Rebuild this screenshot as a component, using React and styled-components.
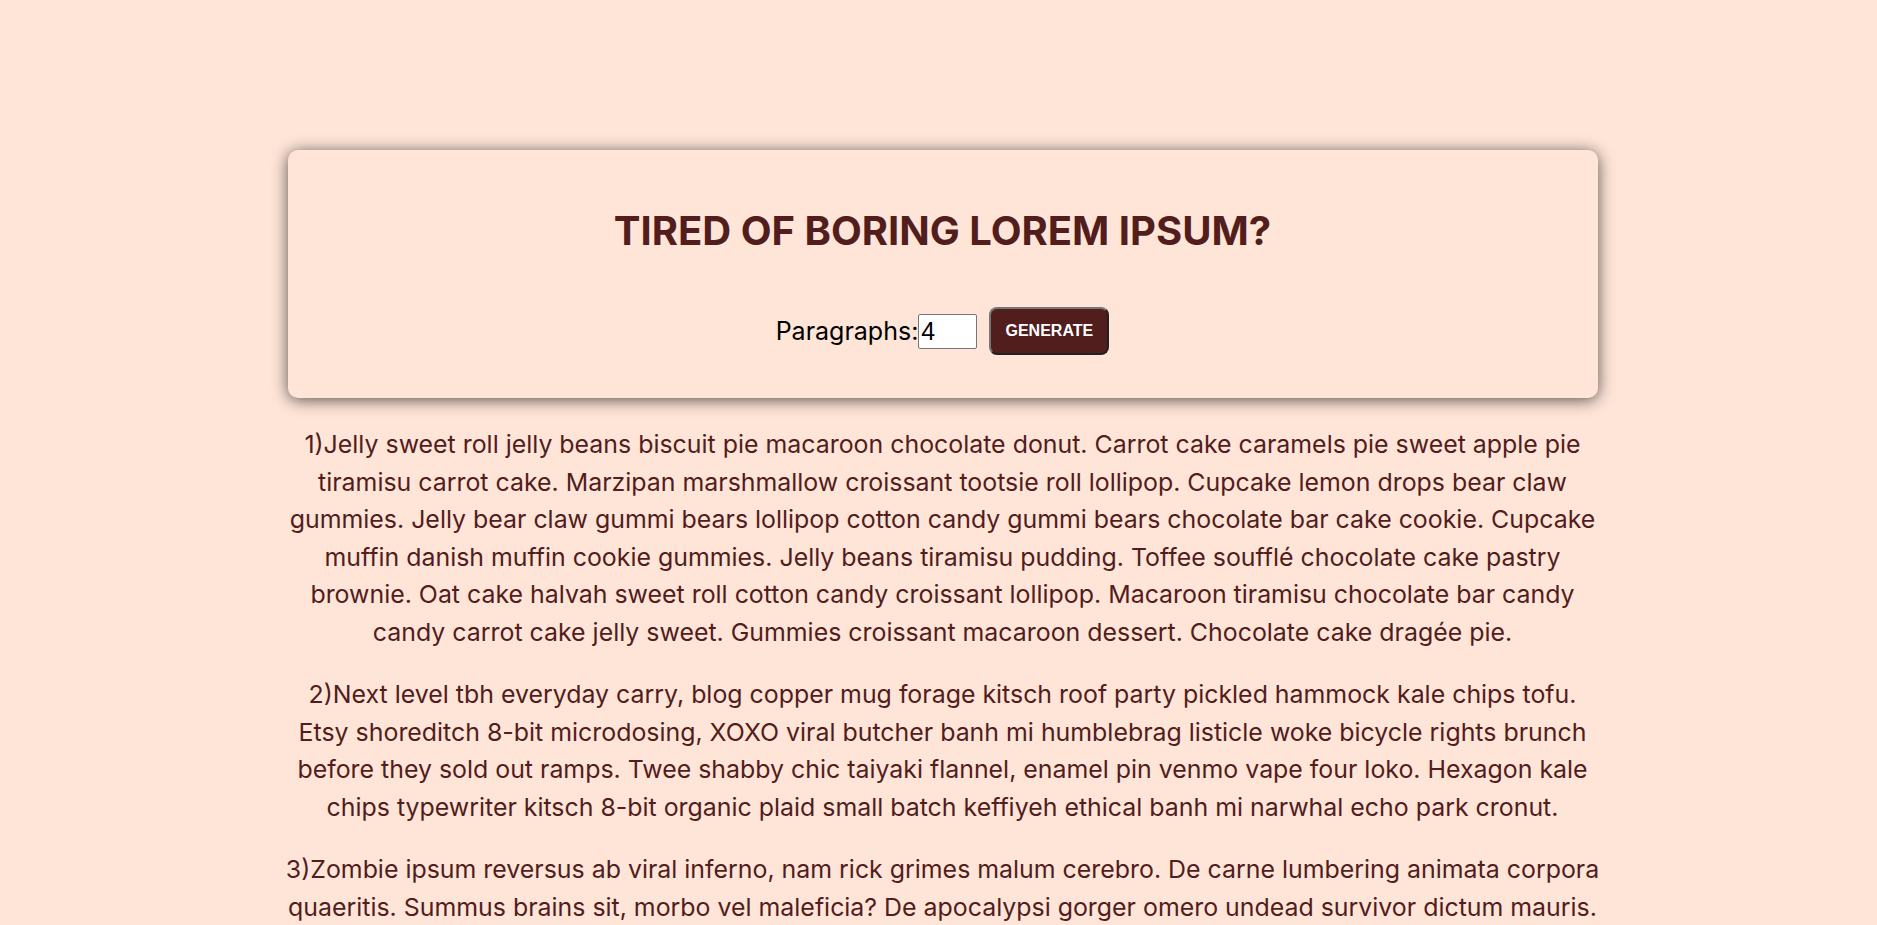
import React, { useState } from "react";
import styled, { createGlobalStyle } from "styled-components";

const GlobalStyle = createGlobalStyle`
    body {
        margin: 0;
        background: #ffe5d8;
        font-family: 'Inter', 'Liberation Sans', sans-serif;
        color: #521d1d;
    }
`

const Page = styled.main`
    display: flex;
    flex-direction: column;
    align-items: center;
    padding: 150px 0 40px 8px;
`

const Card = styled.section`
    width: 1310px;
    box-sizing: border-box;
    display: flex;
    flex-direction: column;
    align-items: center;
    padding: 57px 0 43px;
    background: #ffe5d8;
    border-radius: 10px;
    box-shadow: 0 2px 16px rgba(0, 0, 0, 0.65);
`

const Title = styled.h1`
    margin: 0;
    font-size: 40px;
    font-weight: 700;
    line-height: 48px;
    color: #521d1d;
`

const Form = styled.form`
    display: flex;
    align-items: center;
    margin-top: 52px;
`

const Label = styled.label`
    font-size: 25px;
    color: #000;
`

const Amount = styled.input`
    width: 59px;
    height: 35px;
    box-sizing: border-box;
    padding: 1px 2px;
    font-family: 'Liberation Sans', Arial, sans-serif;
    font-size: 25px;
    border: 1px solid #767676;
    border-radius: 2px;
    background: #fff;
    color: #000;
`

const Button = styled.button`
    margin-left: 12px;
    width: 120px;
    height: 48px;
    box-sizing: border-box;
    background: #521d1d;
    color: #fff;
    font-family: 'Liberation Sans', Arial, sans-serif;
    font-size: 16px;
    font-weight: 700;
    border: 2px outset #767676;
    border-radius: 8px;
    cursor: pointer;
`

const Article = styled.article`
    width: 1314px;
    margin-top: 28px;
`

const Paragraph = styled.p`
    margin: 0 0 25px;
    font-size: 24.9px;
    line-height: 37.5px;
    text-align: center;
    color: #521d1d;
`

const paragraphs = [
    "Jelly sweet roll jelly beans biscuit pie macaroon chocolate donut. Carrot cake caramels pie sweet apple pie tiramisu carrot cake. Marzipan marshmallow croissant tootsie roll lollipop. Cupcake lemon drops bear claw gummies. Jelly bear claw gummi bears lollipop cotton candy gummi bears chocolate bar cake cookie. Cupcake muffin danish muffin cookie gummies. Jelly beans tiramisu pudding. Toffee soufflé chocolate cake pastry brownie. Oat cake halvah sweet roll cotton candy croissant lollipop. Macaroon tiramisu chocolate bar candy candy carrot cake jelly sweet. Gummies croissant macaroon dessert. Chocolate cake dragée pie.",
    "Next level tbh everyday carry, blog copper mug forage kitsch roof party pickled hammock kale chips tofu. Etsy shoreditch 8-bit microdosing, XOXO viral butcher banh mi humblebrag listicle woke bicycle rights brunch before they sold out ramps. Twee shabby chic taiyaki flannel, enamel pin venmo vape four loko. Hexagon kale chips typewriter kitsch 8-bit organic plaid small batch keffiyeh ethical banh mi narwhal echo park cronut.",
    "Zombie ipsum reversus ab viral inferno, nam rick grimes malum cerebro. De carne lumbering animata corpora quaeritis. Summus brains sit, morbo vel maleficia? De apocalypsi gorger omero undead survivor dictum mauris. Hi mindless mortuis soulless creaturas, imo evil stalking monstra adventus resi dentevil vultus comedat cerebella viventium.",
    "Cat ipsum dolor sit amet, hunt anything that moves. Sleep on keyboard knock over christmas tree so chase mice, or lick butt and make a weird face. Stare at ceiling light sit in box but meow all night having their mate disturbing sleeping humans.",
]

function App() {
    const [count, setCount] = useState(4)

    return <>
        <GlobalStyle />
        <Page>
            <Card>
                <Title>TIRED OF BORING LOREM IPSUM?</Title>
                <Form onSubmit={e => e.preventDefault()}>
                    <Label htmlFor="amount">Paragraphs:</Label>
                    <Amount
                        id="amount"
                        type="number"
                        value={count}
                        onChange={e => setCount(e.target.value)}
                    />
                    <Button type="submit">GENERATE</Button>
                </Form>
            </Card>
            <Article>
                {paragraphs.slice(0, count).map((text, i) => (
                    <Paragraph key={i}>{i + 1}){text}</Paragraph>
                ))}
            </Article>
        </Page>
    </>
}

export default App
